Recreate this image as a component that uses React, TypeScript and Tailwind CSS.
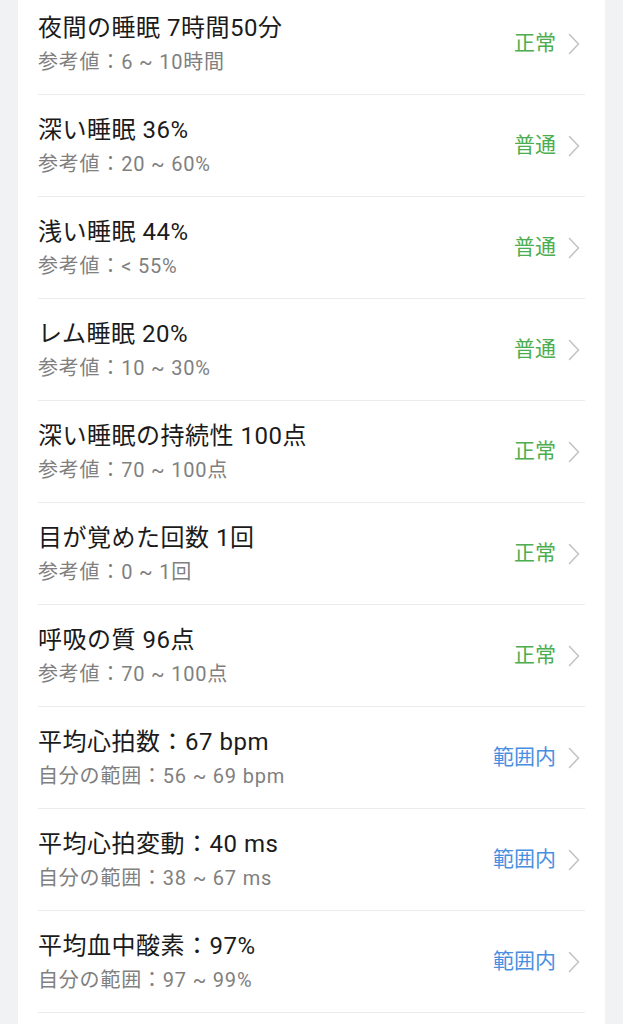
const rows = [
  { title: "夜間の睡眠 7時間50分", sub: "参考値：6 ~ 10時間", status: "正常", tone: "green" },
  { title: "深い睡眠 36%", sub: "参考値：20 ~ 60%", status: "普通", tone: "green" },
  { title: "浅い睡眠 44%", sub: "参考値：< 55%", status: "普通", tone: "green" },
  { title: "レム睡眠 20%", sub: "参考値：10 ~ 30%", status: "普通", tone: "green" },
  { title: "深い睡眠の持続性 100点", sub: "参考値：70 ~ 100点", status: "正常", tone: "green" },
  { title: "目が覚めた回数 1回", sub: "参考値：0 ~ 1回", status: "正常", tone: "green" },
  { title: "呼吸の質 96点", sub: "参考値：70 ~ 100点", status: "正常", tone: "green" },
  { title: "平均心拍数：67 bpm", sub: "自分の範囲：56 ~ 69 bpm", status: "範囲内", tone: "blue" },
  { title: "平均心拍変動：40 ms", sub: "自分の範囲：38 ~ 67 ms", status: "範囲内", tone: "blue" },
  { title: "平均血中酸素：97%", sub: "自分の範囲：97 ~ 99%", status: "範囲内", tone: "blue" },
];

const Chevron = () => (
  <svg width="12" height="22" viewBox="0 0 12 22" fill="none">
    <path d="M1.5 1.5 L10.5 11 L1.5 20.5" stroke="#c4c4c4" strokeWidth="1.6" strokeLinecap="round" strokeLinejoin="round" />
  </svg>
);

export default function App() {
  return (
    <div
      className="min-h-[1024px] w-[623px] overflow-hidden bg-[#f1f2f4] px-[18px]"
      style={{ fontFamily: 'Roboto, "Noto Sans CJK JP", sans-serif' }}
    >
      <div className="-mt-[7px] bg-white px-[20px] pb-[20px]">
        {rows.map((r) => (
          <div key={r.title} className="flex h-[102px] items-center border-b border-[#ebebeb]">
            <div className="flex flex-1 flex-col">
              <span className="text-[24px] leading-[32px] tracking-[0.5px] text-[#1b1b1b]">{r.title}</span>
              <span className="mt-[4px] text-[20px] leading-[28px] tracking-[0.8px] text-[#808080]">{r.sub}</span>
            </div>
            <span
              className={
                r.tone === "green"
                  ? "text-[21px] text-[#4cae50]"
                  : "text-[21px] text-[#4a8fdf]"
              }
            >
              {r.status}
            </span>
            <div className="ml-[12px] mr-[5px]">
              <Chevron />
            </div>
          </div>
        ))}
      </div>
    </div>
  );
}
